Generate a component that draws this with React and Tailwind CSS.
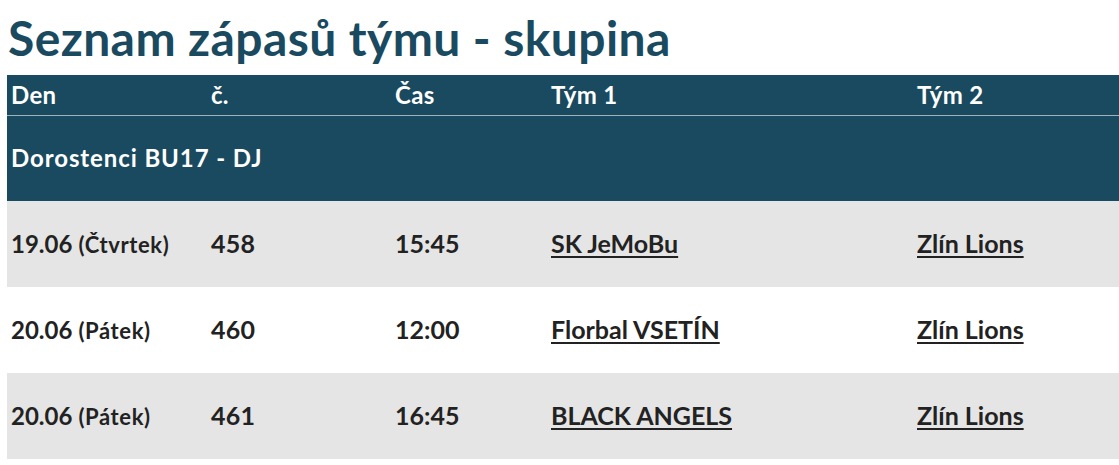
import React from "react";

const rows = [
  { date: "19.06", day: "Čtvrtek", no: "458", time: "15:45", t1: "SK JeMoBu", t2: "Zlín Lions", shade: true },
  { date: "20.06", day: "Pátek", no: "460", time: "12:00", t1: "Florbal VSETÍN", t2: "Zlín Lions", shade: false },
  { date: "20.06", day: "Pátek", no: "461", time: "16:45", t1: "BLACK ANGELS", t2: "Zlín Lions", shade: true },
];

export default function App() {
  return (
    <div
      className="bg-white min-h-[465px] text-[#222]"
      style={{ fontFamily: "Lato, 'Open Sans', sans-serif" }}
    >
      <h1 className="pl-2 pt-[14px] h-[75px] text-[48px] leading-[48px] font-bold text-[#1a4a5f] tracking-[0.4px]">
        Seznam zápasů týmu - skupina
      </h1>
      <table className="ml-[7px] w-[1130px] table-fixed border-collapse">
        <colgroup>
          <col className="w-[200px]" />
          <col className="w-[184px]" />
          <col className="w-[156px]" />
          <col className="w-[366px]" />
          <col />
        </colgroup>
        <thead>
          <tr className="bg-[#1a4a5f] text-white text-[24px] h-[40px] border-b border-[#9fb2bc] tracking-[0.3px]">
            <th className="text-left pl-1 font-bold">Den</th>
            <th className="text-left pl-1 font-bold">č.</th>
            <th className="text-left pl-1 font-bold">Čas</th>
            <th className="text-left pl-1 font-bold">Tým 1</th>
            <th className="text-left pl-1 font-bold">Tým 2</th>
          </tr>
        </thead>
        <tbody>
          <tr className="bg-[#1a4a5f] text-white h-[86px]">
            <td colSpan={5} className="pl-1 text-[24px] font-bold tracking-[0.9px]">
              Dorostenci BU17 - DJ
            </td>
          </tr>
          {rows.map((r, i) => (
            <tr key={i} className={`h-[86px] font-bold text-[25px] ${r.shade ? "bg-[#e5e5e5]" : "bg-white"}`}>
              <td className="pl-1 whitespace-nowrap">
                <span className="text-[24px]">{r.date}</span>{" "}
                <span className="text-[22px] tracking-[0.6px]">({r.day})</span>
              </td>
              <td className="pl-1 tracking-[0.3px]">{r.no}</td>
              <td className="pl-1">{r.time}</td>
              <td className="pl-1">
                <a href="#" className="underline underline-offset-[3px]">{r.t1}</a>
              </td>
              <td className="pl-1">
                <a href="#" className="underline underline-offset-[3px]">{r.t2}</a>
              </td>
            </tr>
          ))}
        </tbody>
      </table>
    </div>
  );
}
